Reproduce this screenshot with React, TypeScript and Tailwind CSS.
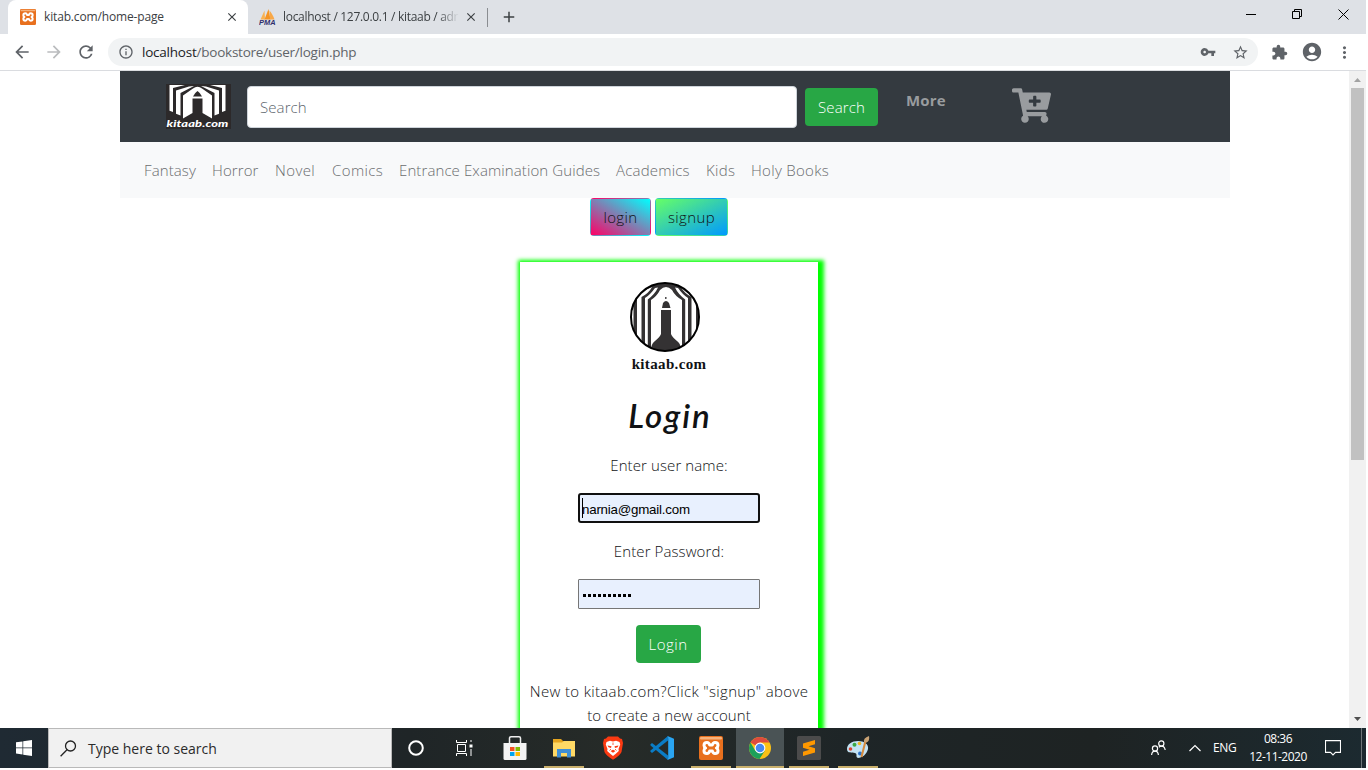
import React from "react";
import { FaCartPlus } from "react-icons/fa";
import {
  MdArrowBack,
  MdArrowForward,
  MdRefresh,
  MdInfoOutline,
  MdVpnKey,
  MdStarBorder,
  MdExtension,
  MdAccountCircle,
  MdMoreVert,
  MdClose,
  MdAdd,
} from "react-icons/md";

function XamppIcon({ size }: { size: number }) {
  return (
    <svg width={size} height={size} viewBox="0 0 24 24" className="shrink-0">
      <rect width="24" height="24" rx="2" fill="#e8701e" />
      <rect x="1" y="1" width="22" height="2.500" rx="1" fill="#f5b27c" />
      <path
        d="M8 6.500q2 0 2.600 2.500h2.800q.6-2.500 2.600-2.500 3 0 3 2.800 0 2-1.600 2.700 1.600.7 1.600 2.700 0 2.800-3 2.800-2 0-2.600-2.500h-2.800q-.6 2.500-2.600 2.500-3 0-3-2.800 0-2 1.600-2.700-1.600-.7-1.600-2.700 0-2.800 3-2.800Z"
        fill="none"
        stroke="#fff"
        strokeWidth="3"
        strokeLinejoin="round"
      />
    </svg>
  );
}

function PmaIcon() {
  return (
    <svg width="18" height="16" viewBox="0 0 18 16" className="shrink-0">
      <path d="M5.500 1.500 1.500 10.500h4.500Z" fill="#f9b253" />
      <path d="M9.500 0 5.500 10.500h6Z" fill="#f59423" />
      <path d="M10.500 1.500c2 2.500 4 5.500 5 9h-4.500Z" fill="#f8a848" />
      <text x="0" y="16" fontFamily="Liberation Sans" fontStyle="italic" fontWeight="700" fontSize="6.500" textLength="16.500" lengthAdjust="spacingAndGlyphs" fill="#2f2f6c">
        PMA
      </text>
    </svg>
  );
}

function BraveIcon() {
  return (
    <svg width="20" height="24" viewBox="0 0 20 24">
      <path d="M5 0.500H15L17 2.500 19 3 20 7 18.500 16Q17.500 19 10 23.800 2.500 19 1.500 16L0 7 1 3 3 2.500Z" fill="#fb3a12" />
      <path
        d="M3.500 6 7 4.800 10 5.500 13 4.800 16.500 6 17.200 8.500 15.500 13 15.800 15 12.500 18 10 20 7.500 18 4.200 15 4.500 13 2.800 8.500Z"
        fill="#fff"
      />
      <path d="M4.500 9.500 8.500 10.200 8 12 5.500 11.200ZM15.500 9.500 11.500 10.200 12 12 14.500 11.200ZM7.500 15 10 13.800 12.500 15 10 16.800Z" fill="#fb3a12" />
      <path d="M10 6.500V9M6.500 14.500 8 13M13.500 14.500 12 13" stroke="#fb3a12" strokeWidth="0.800" />
    </svg>
  );
}

function BrandLogo() {
  return (
    <svg width="65" height="45" viewBox="0 0 65 45" className="shrink-0">
      <rect width="65" height="45" fill="#2c292a" />
      <g fill="#fff">
        <path d="M3.500 1H19L7 4V28L3.500 26.800Z" />
        <path d="M10 6.500 23 2.500 28 2 14.500 9V31.500L10 29.800Z" />
        <path d="M59.500 1H44L56 4V28L59.500 26.800Z" />
        <path d="M53 6.500 40 2.500 35 2 48.500 9V31.500L53 29.800Z" />
        <path d="M17 11.500 27 4.500Q31.500 1 36 4.500L46 11.500V34.500L36.500 29V14.500H26.500V29L17 34.500Z" />
      </g>
      <path d="M27 12.500Q28.500 9 31.500 7 34.500 9 36 12.500Z" fill="#2c292a" />
      <text x="0.500" y="42.800" fontFamily="Lato, sans-serif" fontStyle="italic" fontWeight="900" fontSize="10" textLength="62" lengthAdjust="spacingAndGlyphs" fill="#fff">
        kitaab.com
      </text>
    </svg>
  );
}

function RoundLogo() {
  return (
    <svg width="70" height="70" viewBox="0 0 70 70" className="block">
      <defs>
        <clipPath id="disc">
          <circle cx="35" cy="35" r="34" />
        </clipPath>
      </defs>
      <g clipPath="url(#disc)">
        <rect width="70" height="70" fill="#343233" />
        <g fill="#fff">
          <path d="M21 66V18Q27 14 30 8 36 2 42 8 45 14 52 18V66Z" />
          <path d="M15 70V16Q20 13 25 6L28 5.500Q25 12 17.800 17.500V70Z" />
          <path d="M58 70V16Q53 13 48 6L45 5.500Q48 12 55.200 17.500V70Z" />
          <path d="M7 70V14L13 9 22 5Q19 11 11.500 15V70Z" />
          <path d="M66 70V14L60 9 51 5Q54 11 61.500 15V70Z" />
          <path d="M1 62V20L3.500 17V62Z" />
        </g>
        <path d="M31 28H41V52Q42 55 47 59 50 61 51 66V70H21V66Q22 61 25 59 30 55 31 52Z" fill="#343233" />
        <path d="M32 26 33 21Q36 17 39 21L40.500 26Z" fill="#343233" />
        <circle cx="35.800" cy="16" r="0.900" fill="#343233" />
      </g>
      <circle cx="35" cy="35" r="34" fill="none" stroke="#000" strokeWidth="2" />
    </svg>
  );
}

function TabStrip() {
  return (
    <div className="flex h-[34px] items-stretch bg-[#dee1e6] pl-2 text-[12px] text-[#3c4043]">
      <div className="flex w-[240px] items-center rounded-t-lg bg-white pl-3">
        <XamppIcon size={16} />
        <span className="ml-2 w-[184px] tracking-[-0.150px]">kitab.com/home-page</span>
        <MdClose size={14} className="-ml-[3px] shrink-0 text-[#3c4043]" />
      </div>
      <div className="flex w-[239px] items-center pl-[11px]">
        <PmaIcon />
        <span className="ml-[6px] w-[176px] whitespace-nowrap tracking-[-0.300px] [mask-image:linear-gradient(to_right,black_88%,transparent)]">
          localhost / 127.0.0.1 / kitaab / adr
        </span>
        <MdClose size={14} className="ml-[5px] shrink-0" />
      </div>
      <div className="mt-2 h-[19px] w-px bg-[#8a8d91]" />
      <MdAdd size={18} className="ml-3 mt-2" />
      <div className="ml-auto flex items-start pr-[16px] pt-[8px]">
        <svg width="105" height="14" viewBox="0 0 105 14" fill="none" stroke="#000">
          <path d="M1 6.500H11" />
          <path d="M47.500 3.500h7v7h-7zM49.500 3.500v-2h7v7h-2" />
          <path d="M93.500 1.500l10 10M103.500 1.500l-10 10" />
        </svg>
      </div>
    </div>
  );
}

function Toolbar() {
  return (
    <div className="flex h-[37px] items-center border-b border-[#dadce0] bg-white pl-[12px] text-[#5f6368]">
      <MdArrowBack size={20} />
      <MdArrowForward size={20} className="ml-3 text-[#babcbe]" />
      <MdRefresh size={20} className="ml-3" />
      <div className="ml-3 flex h-[28px] w-[1150px] items-center rounded-full bg-[#f1f3f4] pl-[10px]">
        <MdInfoOutline size={16} />
        <div className="ml-2 text-[13.500px] tracking-[-0.230px]">
          <span className="text-[#202124]">localhost</span>/bookstore/user/login.php
        </div>
        <MdVpnKey size={16} className="ml-auto" />
        <MdStarBorder size={17} className="ml-4 mr-[9px]" />
      </div>
      <MdExtension size={17} className="ml-[13px]" />
      <MdAccountCircle size={22} className="ml-[13px]" />
      <MdMoreVert size={19} className="ml-[12px]" />
    </div>
  );
}

const categories = [
  { name: "Fantasy", box: "w-[52px]" },
  { name: "Horror", box: "w-[47px]" },
  { name: "Novel", box: "w-[41px] tracking-[0.400px]" },
  { name: "Comics", box: "w-[51px] tracking-[0.400px]" },
  { name: "Entrance Examination Guides", box: "w-[201px]" },
  { name: "Academics", box: "w-[74px] tracking-[0.200px]" },
  { name: "Kids", box: "w-[29px] tracking-[0.300px]" },
  { name: "Holy Books", box: "w-[78px] tracking-[0.300px]" },
];

function SiteHeader() {
  return (
    <header className="w-[1110px]">
      <div className="flex h-[71px] items-start bg-[#343a40] pl-[46px]">
        <div className="mt-[13px]">
          <BrandLogo />
        </div>
        <div className="ml-4 mt-[15px] flex h-[42px] w-[550px] items-center rounded border border-[#ced4da] bg-white px-3 text-[#5c656d]">
          Search
        </div>
        <button className="ml-2 mt-[17px] h-[38px] w-[73px] rounded bg-[#28a745] text-white">Search</button>
        <span className="ml-[28px] mt-[17px] w-[106px] font-bold tracking-[0.200px] text-[#999c9f]">More</span>
        <FaCartPlus className="mt-[17px] h-[35px] w-[39px] text-[#999c9f]" />
      </div>
      <nav className="flex h-[56px] items-center gap-4 bg-[#f8f9fa] pl-6 text-[#6a6c6e]">
        {categories.map((c) => (
          <a key={c.name} className={"whitespace-nowrap " + c.box}>
            {c.name}
          </a>
        ))}
      </nav>
    </header>
  );
}

function LoginCard() {
  return (
    <div className="ml-[400px] mt-[26px] flex h-[600px] w-[298px] flex-col items-center bg-white pt-5 shadow-[2px_2px_4px_4px_#00ff00]">
      <div className="mr-2">
        <RoundLogo />
      </div>
      <div className="font-['Liberation_Serif',serif] text-[15px] font-bold leading-6 tracking-[0.350px]">kitaab.com</div>
      <h2 className="mt-[19px] h-10 pl-[2px] font-['Lato',sans-serif] text-[33px] font-semibold italic leading-10 tracking-[2px]">Login</h2>
      <label className="mt-[18px]">Enter user name:</label>
      <div className="mt-4 flex h-[30px] w-[182px] items-center rounded-[3px] border-2 border-[#101010] bg-[#e8f0fe] pl-[2px] font-['Liberation_Sans',sans-serif] text-[13.333px] font-normal text-black">
        <span className="h-5 w-px bg-black" />
        <span className="-ml-px pt-[3px] tracking-[-0.220px]">narnia@gmail.com</span>
      </div>
      <label className="mt-4">Enter Password:</label>
      <div className="mt-4 flex h-[30px] w-[182px] items-center gap-[2px] rounded-[1px] border border-[#767676] bg-[#e8f0fe] pl-[4px] pt-[2px]">
        {Array.from({ length: 10 }, (_, i) => (
          <span key={i} className="h-[3px] w-[3px] bg-black" />
        ))}
      </div>
      <button className="mr-[2px] mt-4 h-[38px] w-[65px] rounded bg-[#28a745] tracking-[0.500px] text-white">Login</button>
      <p className="mt-4 whitespace-nowrap text-center">
        <span className="tracking-[0.340px]">New to kitaab.com?Click "signup" above</span>
        <br />
        to create a new account
      </p>
    </div>
  );
}

function Scrollbar() {
  return (
    <div className="flex w-[17px] shrink-0 flex-col items-center justify-between bg-[#f1f1f1]">
      <svg width="17" height="17" viewBox="0 0 17 17">
        <path d="M5 11 8.500 7 12 11Z" fill="#a3a3a3" />
      </svg>
      <div className="w-[13px] grow">
        <div className="h-[372px] bg-[#c1c1c1]" />
      </div>
      <svg width="17" height="17" viewBox="0 0 17 17">
        <path d="M5 6 8.500 10 12 6Z" fill="#505050" />
      </svg>
    </div>
  );
}

function TaskCell({ children, line, active }: { children: React.ReactNode; line?: boolean; active?: boolean }) {
  return (
    <div className={"flex h-10 w-12 shrink-0 flex-col items-center " + (active ? "bg-[#4a5355]" : "")}>
      <div className="flex h-[38px] items-center pt-[2px]">{children}</div>
      {line && <div className={"h-[2px] bg-[#c9b06c] " + (active ? "w-12" : "w-10")} />}
    </div>
  );
}

function Taskbar() {
  return (
    <div className="flex h-10 items-stretch bg-[linear-gradient(to_right,#1f2a33,#1f2527_30%,#262b28_45%,#1e2527_62%,#1e2323_80%,#1c2a30)] font-['Open_Sans',sans-serif] text-white">
      <div className="flex w-12 items-center justify-center">
        <svg width="16" height="16" viewBox="0 0 16 16" fill="#fff">
          <path d="M0 2.300 6.500 1.400V7.500H0ZM7.200 1.300 16 0V7.500H7.200ZM0 8.300H6.500V14.500L0 13.600ZM7.200 8.300H16V16L7.200 14.700Z" />
        </svg>
      </div>
      <div className="flex w-[344px] items-center border border-[#b9b9b9] bg-[#f1f1f1] pl-[11px] text-[#2b2b2b]">
        <svg width="17" height="17" viewBox="0 0 17 17" fill="none" stroke="#222" strokeWidth="1.300">
          <circle cx="10.500" cy="6" r="5" />
          <path d="M7 9.800 0.600 16.200" />
        </svg>
        <span className="ml-[11px] pt-px text-[14px]">Type here to search</span>
      </div>
      <TaskCell>
        <svg width="18" height="18" viewBox="0 0 18 18">
          <circle cx="9" cy="9" r="6.800" fill="none" stroke="#fff" strokeWidth="2" />
        </svg>
      </TaskCell>
      <TaskCell>
        <svg width="17" height="16" viewBox="0 0 17 16" fill="none" stroke="#fff">
          <path d="M0.500 0V2.500H10.500V0M1.500 4.500H9.500V11.500H1.500ZM0.500 16V13.500H10.500V16M15 0V2M15 9V16" />
          <path d="M13.500 4.500H16.500V7.500H13.500Z" fill="#fff" stroke="none" />
        </svg>
      </TaskCell>
      <div className="ml-[3px] flex gap-px">
        <TaskCell>
          <svg width="24" height="24" viewBox="0 0 24 24">
            <path d="M6.500 8V2Q6.500 0.800 8 0.800H16Q17.500 0.800 17.500 2V8" fill="none" stroke="#eee" strokeWidth="1.500" />
            <path d="M0.500 7H23.500V22.500Q23.500 24 22 24H2Q0.500 24 0.500 22.500Z" fill="#f3f3f3" />
            <path d="M7 11H11.500V15H7Z" fill="#f25022" />
            <path d="M12.500 11H17V15H12.500Z" fill="#7fba00" />
            <path d="M7 16H11.500V20H7Z" fill="#00a4ef" />
            <path d="M12.500 16H17V20H12.500Z" fill="#ffb900" />
          </svg>
        </TaskCell>
        <TaskCell line>
          <svg width="22" height="20" viewBox="0 0 22 20">
            <path d="M0 1H8L10 3H22V17H0Z" fill="#e5a520" />
            <path d="M0 4.500H9L11 3H22V18.500H0Z" fill="#ffd965" />
            <path d="M4 19.500V11H18V19.500H14V15H8V19.500Z" fill="#3f8fd6" />
          </svg>
        </TaskCell>
        <TaskCell>
          <BraveIcon />
        </TaskCell>
        <TaskCell>
          <svg width="24" height="24" viewBox="0 0 24 24">
            <path d="M0.300 8.500 2 7 18 19.500V24L0.800 9.700Z" fill="#0b7cc4" />
            <path d="M0.300 15.500 2 17 18 4.500V0L0.800 14.300Z" fill="#0a7cc6" />
            <path d="M17.500 0 24 2.800V21.200L17.500 24Q18.200 23 18.200 21V3Q18.200 1 17.500 0Z" fill="#2aa5f2" />
          </svg>
        </TaskCell>
        <TaskCell line>
          <XamppIcon size={24} />
        </TaskCell>
        <TaskCell line active>
          <svg width="22" height="22" viewBox="0 0 22 22">
            <circle cx="11" cy="11" r="11" fill="#fbc116" />
            <path d="M11 11 1.500 5.500A11 11 0 0 1 20.500 5.500H11Z" fill="#dd4b3e" />
            <path d="M1.500 5.500A11 11 0 0 0 10.500 22L15.800 13.700 6.300 13.700Z" fill="#1da05a" />
            <circle cx="11" cy="11" r="5.400" fill="#fff" />
            <circle cx="11" cy="11" r="4.300" fill="#4688f1" />
          </svg>
        </TaskCell>
        <TaskCell line>
          <svg width="24" height="24" viewBox="0 0 24 24">
            <rect width="24" height="24" rx="1.500" fill="#4b4b4b" />
            <path d="M18 4V8.300L11.500 10.200 18 12.200V16.500L6 20V15.800L12.500 13.800 6 11.800V7.500Z" fill="#ff9800" />
          </svg>
        </TaskCell>
        <TaskCell line>
          <svg width="24" height="24" viewBox="0 0 24 24">
            <path d="M1 13C1 8 6 5 12 5s11 3 10 8-6 9-10 9c-3-1 0-4-3-5s-8 1-8-4Z" fill="#c3e2f3" />
            <circle cx="4.500" cy="13" r="1.800" fill="#d8432e" />
            <circle cx="8.500" cy="8.700" r="2" fill="#39a845" />
            <circle cx="13.500" cy="7.500" r="1.800" fill="#f0b422" />
            <circle cx="14" cy="17.500" r="2" fill="#2b71c9" />
            <path d="M19.500 5 15.500 21" stroke="#d78a3c" strokeWidth="2" />
            <path d="M18 6Q17 2 23 0 24 5 20.500 6.500Z" fill="#c9a274" />
          </svg>
        </TaskCell>
      </div>
      <div className="ml-auto flex items-center">
        <svg width="15" height="16" viewBox="0 0 15 16" fill="none" stroke="#fff" strokeWidth="1.200">
          <circle cx="4" cy="8.500" r="2.600" />
          <path d="M0.600 15Q1 11.200 4 11.200T7.400 15" />
          <circle cx="10.300" cy="3.500" r="2.600" />
          <path d="M7.800 7.200Q9 6.200 10.500 6.200 13.500 6.200 14.200 10" />
        </svg>
        <svg width="12" height="8" viewBox="0 0 12 8" fill="none" stroke="#fff" strokeWidth="1.200" className="ml-[23px]">
          <path d="M0.500 7 6 1.500 11.500 7" />
        </svg>
        <span className="ml-[12px] w-[24px] text-[12px] tracking-[-0.400px]">ENG</span>
        <div className="ml-[11px] w-[60px] whitespace-nowrap text-center text-[12px] leading-[18px] tracking-[-0.500px]">
          08:36
          <br />
          12-11-2020
        </div>
        <svg width="16" height="16" viewBox="0 0 16 16" fill="none" stroke="#fff" strokeWidth="1.100" className="ml-[17px]">
          <path d="M0.500 0.600H15.500V12.400H10.500L8 15 5.500 12.400H0.500Z" />
        </svg>
        <div className="ml-5 h-10 w-px bg-[#6d7679]" />
        <div className="w-[4px]" />
      </div>
    </div>
  );
}

export default function App() {
  return (
    <div className="flex h-[768px] w-[1366px] flex-col overflow-hidden bg-white font-['Open_Sans',sans-serif]">
      <TabStrip />
      <Toolbar />
      <div className="flex h-[657px] overflow-hidden">
        <main className="w-[1349px] overflow-hidden pl-[120px] text-[15px] font-light leading-6 tracking-[0.100px] text-[#101214]">
          <SiteHeader />
          <div className="ml-[470px] flex gap-1">
            <button className="h-[38px] w-[61px] rounded border border-transparent bg-[linear-gradient(to_top_right,#ff0066,#00ffff)] tracking-[0.400px]">
              login
            </button>
            <button className="h-[38px] w-[73px] rounded border border-transparent bg-[linear-gradient(to_bottom_right,#66ff66,#0099ff)] tracking-[0.400px]">
              signup
            </button>
          </div>
          <LoginCard />
        </main>
        <Scrollbar />
      </div>
      <Taskbar />
    </div>
  );
}
